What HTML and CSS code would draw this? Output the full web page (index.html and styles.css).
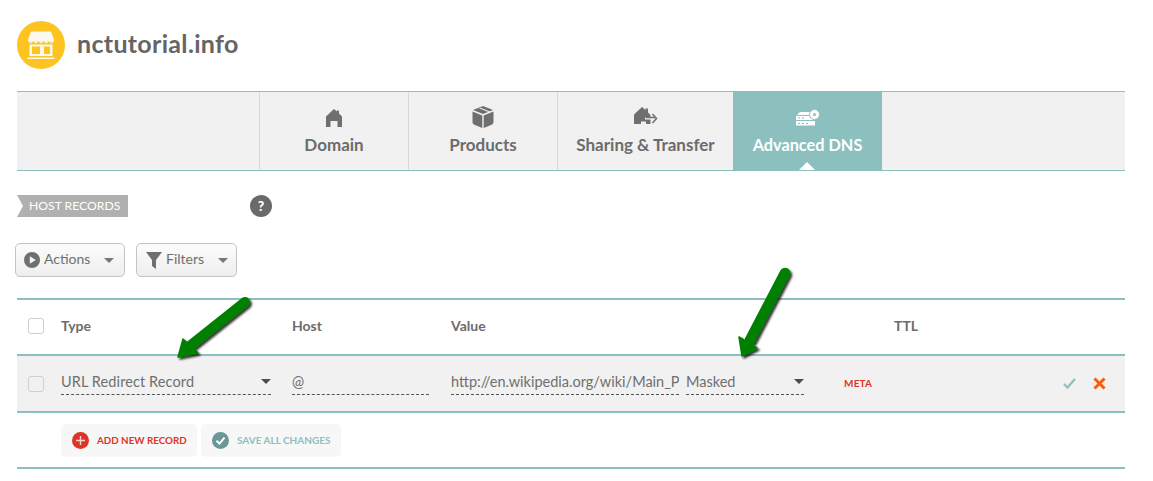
FILE: index.html
```html
<!DOCTYPE html>
<html lang="en">
<head>
<meta charset="utf-8">
<title>nctutorial.info</title>
<link rel="stylesheet" href="styles.css">
</head>
<body>
<div class="page">
  <header class="head">
    <span class="logo">
      <svg width="30" height="30" viewBox="0 0 30 30"><path d="M5 1.500H25L28 9.500V11.500H2V9.500Z" fill="#fbf8ee"/><path d="M2 11.500l2.600 2 2.600-2 2.600 2 2.600-2 2.600 2 2.600-2 2.600 2 2.600-2 2.600 2 2.400-2Z" fill="#fbf8ee"/><path d="M3.500 14.500H26.500V26H3.500ZM6 16.500V24H14V16.500ZM18 16.500V24H24V16.500Z" fill="#fbf8ee" fill-rule="evenodd"/><path d="M1.500 27.500H28.500V29H1.500Z" fill="#fbf8ee"/></svg>
    </span>
    <h1 class="title">nctutorial.info</h1>
  </header>

  <nav class="tabs">
    <div class="tab-blank"></div>
    <a class="tab tab-domain">
      <svg width="16" height="20" viewBox="0 0 16 20"><path d="M8 1l3 2.500V2.500h2v3l3 3V19h-4.500v-6h-7v6H0V8.500Z" fill="#6f6f6f"/></svg>
      <span>Domain</span>
    </a>
    <a class="tab tab-products">
      <svg width="22" height="22" viewBox="0 0 22 22"><path d="M11 0l10 4-10 4L1 4Z" fill="#6f6f6f"/><path d="M7 2.300l10 4 1.500-.6-10-4Z" fill="#f1f1f1"/><path d="M0.500 5.500l9.800 4V22L3 19c-1.500-.7-2.500-1.500-2.500-3ZM21.500 5.500l-9.800 4V22L19 19c1.500-.7 2.500-1.500 2.500-3Z" fill="#6f6f6f"/></svg>
      <span>Products</span>
    </a>
    <a class="tab tab-sharing">
      <svg width="24" height="20" viewBox="0 0 24 20"><path d="M8 0l3.500 3V1.500h2.500v4l2.500 2.500v2.500H11v2h5.500V17H12v-2.500H7V17H0V7.500Z" fill="#6f6f6f"/><path d="M11 10.500h9.500M17.500 7l4 4.500-4 4.500" transform="translate(1 0)" fill="none" stroke="#6f6f6f" stroke-width="1.500"/></svg>
      <span>Sharing &amp; Transfer</span>
    </a>
    <a class="tab tab-active">
      <svg width="25" height="18" viewBox="0 0 25 18"><path d="M5 3h11l1 3H2Z" fill="#fff"/><path d="M1 7h19v4H1ZM1 12h19v4.500H1Z" fill="#fff"/><path d="M3 8.500h2v1H3ZM7 8.500h2v1H7ZM3 14h2v1H3ZM7 14h2v1H7ZM11 14h2v1h-2Z" fill="#8cc0bf"/><circle cx="19.500" cy="5.500" r="5" fill="#fff" stroke="#8cc0bf"/><circle cx="19.500" cy="5.500" r="1.500" fill="#8cc0bf"/></svg>
      <span>Advanced DNS</span>
    </a>
    <div class="tab-rest"></div>
  </nav>

  <section class="section-head">
    <div class="ribbon">HOST RECORDS</div>
    <span class="help">?</span>
  </section>

  <div class="toolbar">
    <button class="tool tool-actions">
      <svg width="16" height="16" viewBox="0 0 16 16"><circle cx="8" cy="8" r="8" fill="#6f6f6f"/><path d="M5.800 4.200l6 3.800-6 3.800Z" fill="#f4f4f4"/></svg>
      <span>Actions</span><i class="caret caret-light"></i>
    </button>
    <button class="tool tool-filters">
      <svg width="16" height="17" viewBox="0 0 16 17"><path d="M0 0h16L10 8v9L6 14V8Z" fill="#6f6f6f"/></svg>
      <span>Filters</span><i class="caret caret-light"></i>
    </button>
  </div>

  <div class="table">
    <div class="row row-head">
      <div class="c-check"><span class="check"></span></div>
      <div class="c-type">Type</div>
      <div class="c-host">Host</div>
      <div class="c-value">Value</div>
      <div class="c-mode"></div>
      <div class="c-ttl">TTL</div>
    </div>
    <div class="row row-body">
      <div class="c-check"><span class="check"></span></div>
      <div class="c-type"><div class="field field-type"><span>URL Redirect Record</span><i class="caret"></i></div></div>
      <div class="c-host"><div class="field field-host"><span>@</span></div></div>
      <div class="c-value"><div class="field field-value"><span>http://en.wikipedia.org/wiki/Main_P</span></div></div>
      <div class="c-mode"><div class="field field-mode"><span>Masked</span><i class="caret"></i></div><span class="meta">META</span></div>
      <div class="c-actions">
        <svg width="13" height="11" viewBox="0 0 13 11"><path d="M1 6l3.500 3.500L12 1" fill="none" stroke="#8cc0bf" stroke-width="2.200"/></svg>
        <svg width="13" height="13" viewBox="0 0 13 13"><path d="M1.500 1.500l10 10M11.500 1.500l-10 10" fill="none" stroke="#ff5a0a" stroke-width="3"/></svg>
      </div>
    </div>
    <div class="foot">
      <button class="pill pill-add">
        <svg width="17" height="17" viewBox="0 0 17 17"><circle cx="8.500" cy="8.500" r="8.500" fill="#df3425"/><path d="M8.500 4v9M4 8.500h9" stroke="#f7d5d0" stroke-width="1.400"/></svg>
        <span>ADD NEW RECORD</span>
      </button>
      <button class="pill pill-save">
        <svg width="17" height="17" viewBox="0 0 17 17"><circle cx="8.500" cy="8.500" r="8.500" fill="#6c9797"/><path d="M4.500 8.800l3 2.800 5-6" fill="none" stroke="#fff" stroke-width="2"/></svg>
        <span>SAVE ALL CHANGES</span>
      </button>
    </div>
  </div>

  <svg class="arrow arrow-left" width="90" height="70" viewBox="0 0 90 70"><defs><filter id="s" x="-30%" y="-30%" width="170%" height="170%"><feDropShadow dx="2" dy="2" stdDeviation="1.300" flood-color="#000" flood-opacity=".8"/></filter></defs><g filter="url(#s)" fill="#068006" stroke="#068006" stroke-linejoin="round"><path d="M73 7L19 50" stroke-width="10" stroke-linecap="round" fill="none"/><path d="M6 62L11 44 26 58Z" stroke-width="1.500"/></g></svg>
  <svg class="arrow arrow-right" width="60" height="95" viewBox="0 0 60 95"><g filter="url(#s)" fill="#068006" stroke="#068006" stroke-linejoin="round"><path d="M52 5L17 72" stroke-width="10.500" stroke-linecap="round" fill="none"/><path d="M9 88L6 69 24 80Z" stroke-width="1.500"/></g></svg>
</div>
</body>
</html>
```
FILE: styles.css
```css
* { box-sizing: border-box; }
html, body { margin: 0; padding: 0; background: #fff; }
body { font-family: Lato, "Open Sans", sans-serif; color: #6f6f6f; overflow: hidden; }
.page { position: relative; width: 1153px; height: 481px; padding-left: 17px; }

.head { display: flex; align-items: center; gap: 12px; height: 91px; padding-bottom: 1px; }
.logo { width: 48px; height: 48px; border-radius: 50%; background: #fdc321; display: flex; align-items: center; justify-content: center; }
.title { margin: -4px 0 0; font-size: 25px; font-weight: 700; color: #656565; letter-spacing: .32px; }

.tabs { display: flex; width: 1108px; height: 80px; background: #f1f1f1; border-top: 1px solid #8cc0bf; border-bottom: 1px solid #8cc0bf; }
.tab-blank { width: 243px; border-right: 1px solid #d8d8d8; }
.tab-rest { flex: 1; }
.tab { position: relative; display: flex; flex-direction: column; align-items: center; justify-content: flex-start; font-size: 17px; font-weight: 700; color: #6c6c6c; border-right: 1px solid #d8d8d8; height: 78px; white-space: nowrap; }
.tab svg { display: block; }
.tab span { position: absolute; top: 43px; left: 0; right: 0; text-align: center; line-height: 20px; }
.tab-domain { width: 149px; padding-top: 16px; }
.tab-products { width: 149px; padding-top: 14px; }
.tab-sharing { width: 175px; padding-top: 15px; border-right: 0; }
.tab-active { width: 149px; padding-top: 17px; background: #8cc0bf; color: #fff; border-right: 0; font-size: 16.300px; }
.tab-active::after { content: ""; position: absolute; left: 66px; bottom: 0; width: 0; height: 0; border-left: 8px solid transparent; border-right: 8px solid transparent; border-bottom: 8px solid #fff; }

.section-head { display: flex; align-items: center; height: 22px; margin-top: 24px; }
.ribbon { width: 111px; height: 22px; background: #b0b0b0; color: #fff; font-size: 12.200px; line-height: 21px; padding-left: 12px; clip-path: polygon(0 0, 100% 0, 100% 100%, 0 100%, 6px 50%); }
.help { width: 22px; height: 22px; margin-left: 122px; border-radius: 50%; background: #6a6a6a; color: #fff; font-size: 14px; font-weight: 900; line-height: 22px; text-align: center; }

.toolbar { display: flex; gap: 11px; margin-top: 26px; margin-left: -2px; }
.tool { display: flex; align-items: center; height: 34px; padding: 0; border: 1px solid #c4c4c4; border-radius: 5px; background: linear-gradient(#fcfcfc, #eeeeee); color: #6f6f6f; font: 400 14px Lato, sans-serif; }
.tool span { margin-top: -3px; }
.tool-actions { width: 110px; padding-left: 8px; gap: 4px; }
.tool-filters { width: 101px; padding-left: 9px; gap: 4px; }
.tool .caret { margin-left: 10px; }
.caret { display: inline-block; width: 0; height: 0; border-left: 5px solid transparent; border-right: 5px solid transparent; border-top: 5px solid #4c4c4c; }
.caret-light { border-top-color: #777; }

.table { width: 1108px; margin-top: 21px; }
.row { display: flex; align-items: center; }
.row-head { height: 58px; border-top: 2px solid #8cc0bf; border-bottom: 2px solid #8cc0bf; font-size: 14px; font-weight: 700; color: #6c6c6c; padding-bottom: 2px; }
.row-head .c-type, .row-head .c-host, .row-head .c-value, .row-head .c-ttl { margin-top: -2px; }
.row-body { height: 57px; background: #f1f1f1; border-bottom: 2px solid #8cc0bf; font-size: 14.500px; color: #6f6f6f; }
.c-check { width: 44px; padding-left: 11px; display: flex; }
.check { width: 16px; height: 16px; border: 1px solid #cfcfcf; border-radius: 3px; background: #fff; }
.row-body .check { background: #f1f1f1; }
.c-type { width: 231px; }
.c-host { width: 159px; }
.c-value { width: 235px; }
.c-mode { width: 208px; display: flex; align-items: center; }
.c-ttl { width: 100px; }
.field { display: flex; align-items: center; justify-content: space-between; height: 22px; border-bottom: 1px dashed #555; white-space: nowrap; overflow: hidden; padding-bottom: 3px; }
.field-type { width: 210px; letter-spacing: .1px; }
.field-host { width: 137px; }
.field-value { width: 228px; }
.field-mode { width: 118px; }
.meta { margin-left: 40px; margin-top: -1px; font-size: 10px; font-weight: 700; color: #df3425; letter-spacing: .2px; }
.c-actions { margin-left: auto; display: flex; align-items: center; gap: 17px; padding-right: 19px; }

.foot { display: flex; gap: 4px; height: 56px; padding: 11px 0 0 44px; border-bottom: 2px solid #8cc0bf; }
.pill { display: flex; align-items: center; height: 33px; padding: 0; border: 0; border-radius: 5px; background: #f7f7f7; font: 700 9.800px Lato, sans-serif; gap: 8px; }
.pill span { margin-top: -2px; }
.pill-add { width: 136px; padding-left: 11px; color: #df3425; }
.pill-save { width: 140px; padding-left: 11px; color: #8cc0bf; font-size: 10px; }

.arrow { position: absolute; overflow: visible; }
.arrow-left { left: 172px; top: 295px; }
.arrow-right { left: 733px; top: 268px; }
```
